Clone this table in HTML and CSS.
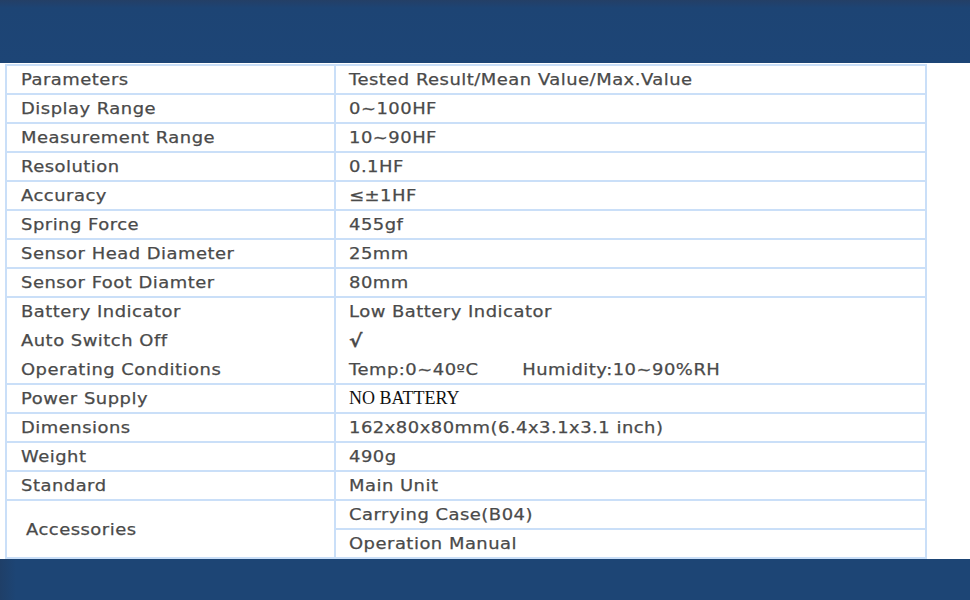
FILE: index.html
```
<!DOCTYPE html>
<html>
<head>
<meta charset="utf-8">
<link rel="stylesheet" href="styles.css">
</head>
<body>
<div class="band band-top"></div>
<table class="spec">
  <tr><td class="k"><span class="t">Parameters</span></td><td class="v"><span class="t">Tested Result/Mean Value/Max.Value</span></td></tr>
  <tr><td class="k"><span class="t">Display Range</span></td><td class="v"><span class="t">0~100HF</span></td></tr>
  <tr><td class="k"><span class="t">Measurement Range</span></td><td class="v"><span class="t">10~90HF</span></td></tr>
  <tr><td class="k"><span class="t">Resolution</span></td><td class="v"><span class="t">0.1HF</span></td></tr>
  <tr><td class="k"><span class="t">Accuracy</span></td><td class="v"><span class="t">≤±1HF</span></td></tr>
  <tr><td class="k"><span class="t">Spring Force</span></td><td class="v"><span class="t">455gf</span></td></tr>
  <tr><td class="k"><span class="t">Sensor Head Diameter</span></td><td class="v"><span class="t">25mm</span></td></tr>
  <tr><td class="k"><span class="t">Sensor Foot Diamter</span></td><td class="v"><span class="t">80mm</span></td></tr>
  <tr class="joined"><td class="k"><span class="t">Battery Indicator</span></td><td class="v"><span class="t">Low Battery Indicator</span></td></tr>
  <tr class="joined"><td class="k"><span class="t">Auto Switch Off</span></td><td class="v check"><span class="t">√</span></td></tr>
  <tr><td class="k"><span class="t">Operating Conditions</span></td><td class="v"><span class="t">Temp:0~40ºC<span class="gap"></span>Humidity:10~90%RH</span></td></tr>
  <tr><td class="k"><span class="t">Power Supply</span></td><td class="v serif">NO BATTERY</td></tr>
  <tr><td class="k"><span class="t">Dimensions</span></td><td class="v"><span class="t">162x80x80mm(6.4x3.1x3.1 inch)</span></td></tr>
  <tr><td class="k"><span class="t">Weight</span></td><td class="v"><span class="t">490g</span></td></tr>
  <tr><td class="k"><span class="t">Standard</span></td><td class="v"><span class="t">Main Unit</span></td></tr>
  <tr><td class="k acc" rowspan="2"><span class="t">Accessories</span></td><td class="v"><span class="t">Carrying Case(B04)</span></td></tr>
  <tr><td class="v"><span class="t">Operation Manual</span></td></tr>
</table>
<div class="band band-bottom"></div>
</body>
</html>
```
FILE: styles.css
```
html, body {
  margin: 0;
  padding: 0;
  background: #ffffff;
  width: 970px;
  height: 600px;
  overflow: hidden;
}
.band {
  background: #1d4575;
}
.band-top {
  height: 63px;
  margin-bottom: 1px;
  background: linear-gradient(to bottom, #243f66 0px, #1d4474 8px, #1d4576 100%);
}
.band-bottom {
  height: 42px;
  background: linear-gradient(to right, #1f3f68 0px, #1d4575 16px, #1d4575 100%);
}
.spec {
  border-collapse: collapse;
  margin-left: 5px;
  width: 922px;
  font-family: "DejaVu Sans", Verdana, sans-serif;
  font-size: 16px;
  color: #4a4a4a;
  table-layout: fixed;
}
.spec td {
  border: 2px solid #cadff8;
  height: 27px;
  padding: 0;
  white-space: nowrap;
  vertical-align: middle;
}
.t {
  display: inline-block;
  letter-spacing: 0.45px;
  transform: scaleX(1.12);
  transform-origin: left center;
  -webkit-text-stroke: 0.25px #4a4a4a;
}
.spec tr.joined td {
  border-bottom-color: transparent;
}
.spec tr.joined + tr td,
.spec tr.joined + tr.joined td {
  border-top-color: transparent;
}
.k {
  width: 313px;
  padding-left: 14px !important;
}
.v {
  padding-left: 13px !important;
}
.acc {
  padding-left: 19px !important;
}
.check {
  font-size: 18px;
  font-weight: bold;
}
.serif {
  font-family: "Liberation Serif", "Times New Roman", serif;
  font-size: 18px;
  color: #111111;
}
.gap {
  display: inline-block;
  width: 39px;
}
```
